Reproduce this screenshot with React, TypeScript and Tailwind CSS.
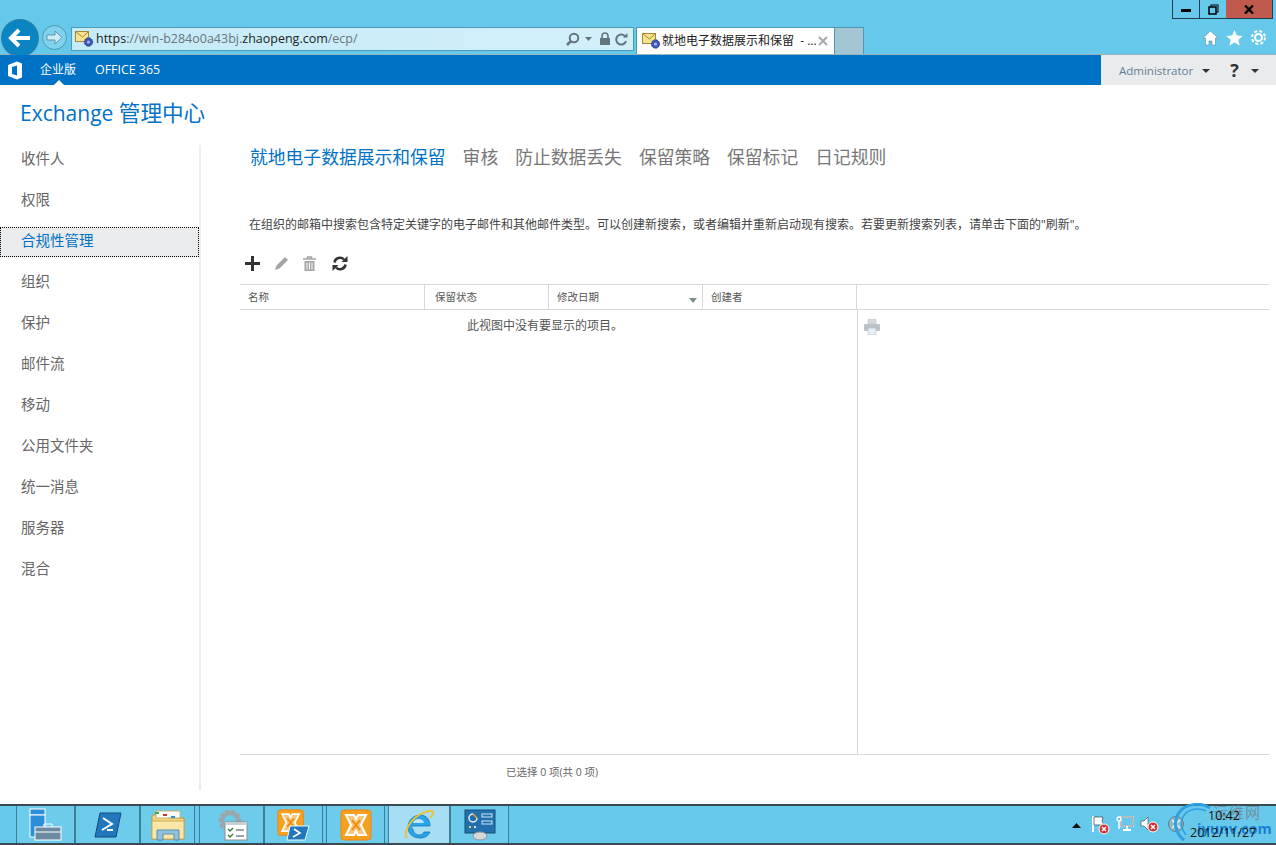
import React from "react";

const MailIcon = () => (
  <svg width="20" height="18" viewBox="0 0 20 18" className="shrink-0">
    <rect x="0.5" y="1.5" width="13" height="10" fill="#f7e28f" stroke="#a58b35" />
    <path d="M1 2l6.500 5L13 2" fill="none" stroke="#a58b35" />
    <circle cx="13.500" cy="12" r="4.200" fill="#3d56b5" stroke="#25357e" strokeDasharray="1.500 1" />
    <circle cx="13.500" cy="12" r="1.600" fill="#a8b7ee" />
  </svg>
);

const ExchangeMark = ({ s }: { s: number }) => (
  <g transform={`scale(${s})`}>
    <rect x="1" y="1" width="30" height="30" rx="3" fill="#f7a01f" stroke="#ec8410" />
    <path d="M6 6h8l2 4 2-4h8l-5 10 5 10h-8l-2-4-2 4H6l5-10z" fill="#f9c777" stroke="#fff" strokeWidth="2" />
    <path d="M12 11l4 5 4-5M12 21l4-5 4 5" fill="none" stroke="#f08a10" strokeWidth="2" />
  </g>
);

const Tray = () => (
  <div className="relative h-full w-[206px]">
    <svg width="9" height="5" viewBox="0 0 9 5" className="absolute left-[2px] top-[17px]"><path d="M4.500 0L9 5H0z" fill="#111" /></svg>
    <svg width="20" height="20" viewBox="0 0 20 20" className="absolute left-[21px] top-[9px]">
      <path d="M2 1v16" stroke="#fff" strokeWidth="2" /><path d="M3 2h9l-1 4 2 4H3z" fill="#fff" stroke="#345" strokeWidth=".7" />
      <circle cx="13" cy="14" r="5" fill="#d32f2f" stroke="#fff" /><path d="M11 12l4 4m0-4l-4 4" stroke="#fff" strokeWidth="1.500" />
    </svg>
    <svg width="18" height="18" viewBox="0 0 18 18" className="absolute left-[46px] top-[9px]">
      <rect x="5" y="2" width="12" height="9" fill="none" stroke="#fff" strokeWidth="1.800" /><rect x="5" y="2" width="12" height="9" fill="none" stroke="#234" strokeWidth=".6" />
      <path d="M11 11v3M7 15h8" stroke="#fff" strokeWidth="1.800" /><circle cx="3" cy="4" r="2" fill="none" stroke="#fff" strokeWidth="1.400" /><path d="M3 6v8" stroke="#fff" strokeWidth="1.400" />
    </svg>
    <svg width="20" height="18" viewBox="0 0 20 18" className="absolute left-[70px] top-[9px]">
      <path d="M1 6h3l4-4v13l-4-4H1z" fill="#fff" stroke="#345" strokeWidth=".6" />
      <circle cx="13" cy="12" r="5" fill="#d32f2f" stroke="#fff" /><path d="M11 10l4 4m0-4l-4 4" stroke="#fff" strokeWidth="1.500" />
    </svg>
    <svg width="18" height="18" viewBox="0 0 18 18" className="absolute left-[97px] top-[9px]">
      <circle cx="9" cy="9" r="7.500" fill="#8fb9c7" stroke="#5f7c88" /><path d="M5 5l8 8M13 5l-8 8" stroke="#e8f4f8" strokeWidth="1.500" />
    </svg>
    <svg width="56" height="40" viewBox="0 0 56 40" className="absolute left-[102px] top-[-3px]">
      <path d="M38 5C29-1 13 0 6 11c-5 9-2 20 6 26" fill="none" stroke="#2f9fe0" strokeWidth="3" />
      <path d="M34 8C26 4 15 6 11 14c-3 6-1 13 3 18" fill="none" stroke="#2f9fe0" strokeWidth="1.500" />
    </svg>
    <div className="absolute left-[143px] top-[-1px] text-[15px] leading-[15px] tracking-[1px] text-[#6f8f9e]">运维网</div>
    <div className="absolute left-[127px] top-[15px] text-[14.500px] font-bold leading-[16px] text-[#1a80d2]">iyunv.com</div>
    <div className="absolute left-[138px] top-[1px] text-[12.500px] leading-[18px] text-[#111]">10:42</div>
    <div className="absolute left-[120px] top-[18px] text-[12.500px] leading-[18px] text-[#111]">2012/11/27</div>
  </div>
);

const tasks: { w: number; ml?: number; active?: boolean; icon: React.ReactNode }[] = [
  { w: 59, icon: (
    <svg width="33" height="33" viewBox="0 0 33 33">
      <rect x="1" y="1" width="15" height="6" fill="#2a8fd8" stroke="#fff" /><rect x="1" y="7" width="15" height="22" fill="#2a8fd8" stroke="#fff" />
      <rect x="6" y="19" width="26" height="13" fill="#6d8ba0" stroke="#fff" /><path d="M15 19v-3h8v3M6 24h26" fill="none" stroke="#fff" />
    </svg>) },
  { w: 65, icon: (
    <svg width="28" height="26" viewBox="0 0 28 26">
      <path d="M6 1h21l-5 24H1z" fill="#2277bd" stroke="#154a7a" /><path d="M9 6l9 6-10 6M13 18h6" fill="none" stroke="#fff" strokeWidth="2" />
    </svg>) },
  { w: 55, icon: (
    <svg width="34" height="32" viewBox="0 0 34 32">
      <path d="M1 6h13l2 3h17v21H1z" fill="#f4d67c" stroke="#b6964a" /><rect x="5" y="2" width="24" height="7" fill="#fff" stroke="#c9b27a" />
      <rect x="4" y="3" width="4" height="2" fill="#3aa845" /><rect x="12" y="5" width="4" height="2" fill="#c9342c" /><rect x="20" y="7" width="4" height="2" fill="#2a8fd8" />
      <path d="M1 12h32v18H1z" fill="#fbe8a8" stroke="#c9a95a" /><path d="M6 31V21h22v10h-5v-6H12v6z" fill="#8fc3dd" stroke="#5a8eab" />
    </svg>) },
  { w: 65, ml: 4, icon: (
    <svg width="32" height="33" viewBox="0 0 32 33">
      <circle cx="14" cy="13" r="10" fill="none" stroke="#9aa7ad" strokeWidth="3" strokeDasharray="4 2" /><circle cx="14" cy="13" r="8" fill="none" stroke="#9aa7ad" strokeWidth="4" />
      <rect x="9" y="14" width="22" height="18" fill="#fff" stroke="#8a8f94" /><rect x="9" y="14" width="22" height="3" fill="#c9ced2" />
      <path d="M12 21l2 2 3-3M12 27l2 2 3-3" fill="none" stroke="#2d7f2e" strokeWidth="1.300" /><path d="M20 22h8M20 28h8" stroke="#3b4a55" />
    </svg>) },
  { w: 59, icon: (
    <svg width="33" height="32" viewBox="0 0 33 32">
      <ExchangeMark s={0.85} />
      <path d="M13 17h19l-4 14H10z" fill="#2277bd" stroke="#dff" /><path d="M17 20l6 4-7 4" fill="none" stroke="#fff" strokeWidth="1.600" />
    </svg>) },
  { w: 59, ml: 3, icon: (
    <svg width="32" height="32" viewBox="0 0 32 32"><ExchangeMark s={1} /></svg>) },
  { w: 62, ml: 3, active: true, icon: (
    <svg width="32" height="32" viewBox="0 0 32 32">
      <path d="M9 17h18c0-7-4-11-10-11S5 11 5 18s5 11 12 11c5 0 8-2 10-6h-6c-1 2-2 3-5 3-3 0-6-3-6-6" fill="#2ba3e8" stroke="#0d6db4" strokeWidth=".7" />
      <path d="M10 14h11c-.5-3-3-4-5.500-4S11 11 10 14z" fill="#bfe6fa" />
      <path d="M4 29C0 25 6 12 16 6c7-4 13-5 14-3 1 1-1 4-3 6" fill="none" stroke="#eec22f" strokeWidth="1.800" />
    </svg>) },
  { w: 59, icon: (
    <svg width="32" height="32" viewBox="0 0 32 32">
      <rect x="1" y="1" width="30" height="23" fill="#2270ad" stroke="#174e79" /><path d="M9 5a4 4 0 1 0 4 4" fill="none" stroke="#f4f4f4" strokeWidth="1.400" /><path d="M9 5l4 4" stroke="#f2a23a" strokeWidth="1.500" />
      <rect x="18" y="5" width="10" height="3" fill="none" stroke="#cfe6f5" /><rect x="18" y="12" width="10" height="3" fill="none" stroke="#cfe6f5" />
      <rect x="5" y="17" width="2" height="2" fill="#e8d04c" /><rect x="10" y="17" width="2" height="2" fill="#cfe6f5" />
      <ellipse cx="16" cy="27" rx="7" ry="4" fill="#d4d8da" stroke="#8d9498" />
    </svg>) },
];

const sidebar = ["收件人", "权限", "合规性管理", "组织", "保护", "邮件流", "移动", "公用文件夹", "统一消息", "服务器", "混合"];
const tabs = ["就地电子数据展示和保留", "审核", "防止数据丢失", "保留策略", "保留标记", "日记规则"];

export default function App() {
  return (
    <div className="flex h-[845px] w-[1276px] flex-col overflow-hidden bg-white text-[#333]" style={{ fontFamily: '"Open Sans","Noto Sans CJK SC",sans-serif' }}>
      {/* browser chrome */}
      <header className="flex h-[55px] shrink-0 flex-col border-b border-[#98b4bf] bg-[#66c9eb]">
        <div className="flex h-[20px] justify-end pr-[3px]">
          <div className="flex h-[19px] border border-t-0 border-[#1c3f50]">
            <div className="flex w-[27px] items-center justify-center border-r border-[#1c3f50]"><div className="mt-[2px] h-[3px] w-[10px] bg-black" /></div>
            <div className="flex w-[26px] items-center justify-center">
              <svg width="11" height="11" viewBox="0 0 11 11"><rect x="3" y="1" width="7" height="7" fill="none" stroke="#000" /><rect x="1" y="3" width="7" height="7" fill="#66c9eb" stroke="#000" strokeWidth="1.500" /></svg>
            </div>
            <div className="flex w-[46px] items-center justify-center bg-[#c0594e]">
              <svg width="10" height="9" viewBox="0 0 10 9"><path d="M1 .5l8 8M9 .5l-8 8" stroke="#000" strokeWidth="2.400" /></svg>
            </div>
          </div>
        </div>
        <div className="flex h-[34px] items-start">
          <div className="ml-[2px] flex h-[36px] w-[36px] shrink-0 items-center justify-center rounded-full bg-[#0b84c2] ring-1 ring-[#2a7fa5]">
            <svg width="24" height="20" viewBox="0 0 24 20"><path d="M11 2L3 10l8 8M3 10h19" fill="none" stroke="#fff" strokeWidth="4" /></svg>
          </div>
          <div className="ml-[4px] mt-[5px] flex h-[25px] w-[25px] shrink-0 items-center justify-center rounded-full border border-[#4a9bb5] bg-[#7fd2ee]">
            <svg width="17" height="15" viewBox="0 0 17 15"><path d="M9 1l7 6.500-7 6.500v-4H1V5h8z" fill="#cdeef8" stroke="#5e96a8" /></svg>
          </div>
          <div className="ml-[4px] mt-[7px] flex h-[24px] w-[563px] shrink-0 items-center border border-[#4a9bb5] bg-gradient-to-r from-[#c4ebf8] to-[#d2f0fa] pl-[3px] pr-[5px]">
            <MailIcon />
            <div className="ml-[1px] flex-1 whitespace-nowrap text-[12.500px] leading-none text-[#6b7378]">
              <span className="text-[#222]">https</span>://win-b284o0a43bj.<span className="text-[#222]">zhaopeng.com</span>/ecp/
            </div>
            <svg width="15" height="15" viewBox="0 0 15 15"><circle cx="9" cy="6" r="4.300" fill="none" stroke="#64757c" strokeWidth="2" /><path d="M6 9l-4 4" stroke="#64757c" strokeWidth="2.500" /></svg>
            <svg width="9" height="5" viewBox="0 0 9 5" className="ml-[4px]"><path d="M1 0h7L4.500 4z" fill="#64757c" /></svg>
            <svg width="12" height="14" viewBox="0 0 12 14" className="ml-[6px]"><rect x="1" y="6" width="10" height="7" fill="#64757c" /><path d="M3 6V4a3 3 0 0 1 6 0v2" fill="none" stroke="#64757c" strokeWidth="1.600" /></svg>
            <svg width="13" height="13" viewBox="0 0 13 13" className="ml-[4px]"><path d="M10.500 4A5 5 0 1 0 11 8" fill="none" stroke="#64757c" strokeWidth="2" /><path d="M8 4.500h4.500V0z" fill="#64757c" /></svg>
          </div>
          <div className="ml-[2px] mt-[7px] flex h-[27px] w-[199px] shrink-0 items-center border-x border-t border-[#4a9bb5] bg-white pl-[5px] pr-[6px]">
            <MailIcon />
            <span className="flex-1 whitespace-nowrap text-[12px] leading-none text-[#222]">就地电子数据展示和保留 &nbsp;- ...</span>
            <svg width="10" height="10" viewBox="0 0 10 10"><path d="M1 1l8 8M9 1l-8 8" stroke="#a3abaf" strokeWidth="2" /></svg>
          </div>
          <div className="mt-[7px] h-[27px] w-[29px] shrink-0 border-r border-t border-[#4a9bb5] bg-[#a3c5d4]" />
          <div className="ml-auto mr-[9px] mt-[9px] flex items-center gap-[7px]">
            <svg width="17" height="16" viewBox="0 0 17 16"><path d="M8.500 1L1 8h2.500v7h3.500v-4h3v4h3.500V8H16z" fill="#fff" stroke="#4a7a90" strokeWidth=".5" /></svg>
            <svg width="17" height="16" viewBox="0 0 17 16"><path d="M8.500 0l2.400 5.400 5.800.6-4.400 3.800 1.300 5.700-5.100-3-5.100 3 1.300-5.700L.3 6l5.800-.6z" fill="#fff" /></svg>
            <svg width="17" height="17" viewBox="0 0 17 17"><circle cx="8.500" cy="8.500" r="3.500" fill="none" stroke="#fff" strokeWidth="2" /><circle cx="8.500" cy="8.500" r="6.500" fill="none" stroke="#fff" strokeWidth="2" strokeDasharray="3 2.100" /></svg>
          </div>
        </div>
      </header>

      {/* suite bar */}
      <nav className="flex h-[30px] shrink-0 items-center bg-[#0072c6] text-white">
        <svg width="16" height="19" viewBox="0 0 16 19" className="ml-[7px]">
          <path d="M1 4L10 .5 15 2.500v14L10 18.500 1 15z" fill="#fff" /><path d="M5 6l5-1.500v10L5 13z" fill="#0072c6" />
        </svg>
        <div className="relative ml-[17px] flex h-full items-center text-[12px]">
          企业版
          <div className="absolute bottom-0 left-[14px] h-0 w-0 border-x-[5px] border-b-[5px] border-x-transparent border-b-white" />
        </div>
        <span className="ml-[19px] text-[12.400px]">OFFICE 365</span>
        <div className="ml-auto flex h-full w-[175px] items-center bg-[#eaebec] text-[#5f7f99]">
          <span className="ml-[18px] mt-[1px] text-[11.500px]">Administrator</span>
          <div className="ml-[9px] mt-[1px] h-0 w-0 border-x-[4px] border-t-[4px] border-x-transparent border-t-[#333]" />
          <span className="ml-[20px] text-[18px] font-bold leading-none text-[#333]">?</span>
          <div className="ml-[12px] mt-[1px] h-0 w-0 border-x-[4px] border-t-[4px] border-x-transparent border-t-[#333]" />
        </div>
      </nav>

      {/* page */}
      <div className="flex min-h-0 flex-1 flex-col">
        <h1 className="ml-[20px] mt-[13px] h-[47px] text-[21px] font-normal leading-[30px] text-[#0072c6]">
          Exchange <span className="text-[21.600px]">管理中心</span>
        </h1>
        <div className="flex min-h-0 flex-1 pb-[14px]">
          <aside className="flex w-[201px] shrink-0 flex-col gap-[11px] border-r-2 border-[#eeeeee]">
            {sidebar.map((s) => (
              <div
                key={s}
                className={
                  "flex h-[30px] items-center pb-[2px] text-[14.500px] " +
                  (s === "合规性管理"
                    ? "border border-dotted border-black bg-[#eaebec] pl-[20px] text-[#0072c6]"
                    : "pl-[21px] text-[#666]")
                }
              >
                {s}
              </div>
            ))}
          </aside>
          <main className="flex min-w-0 flex-1 flex-col pl-[39px] pr-[7px]">
            <div className="flex h-[26px] items-center gap-[17px] pl-[10px] text-[17.800px] leading-none text-[#777]">
              {tabs.map((t, i) => (
                <span key={t} className={i === 0 ? "text-[#0072c6]" : ""}>{t}</span>
              ))}
            </div>
            <p className="mt-[42px] h-[24px] whitespace-nowrap pl-[9px] text-[12px] leading-[24px] text-[#444]">
              在组织的邮箱中搜索包含特定关键字的电子邮件和其他邮件类型。可以创建新搜索，或者编辑并重新启动现有搜索。若要更新搜索列表，请单击下面的"刷新"。
            </p>
            <div className="mt-[14px] flex h-[24px] items-center gap-[14px] pl-[5px]">
              <svg width="15" height="15" viewBox="0 0 15 15"><path d="M7.500 0v15M0 7.500h15" stroke="#333" strokeWidth="3" /></svg>
              <svg width="15" height="15" viewBox="0 0 15 15"><path d="M11 1l3 3-8.500 8.500-4.500 1.500 1.500-4.500z" fill="#a5a5a5" /></svg>
              <svg width="13" height="15" viewBox="0 0 13 15"><path d="M0 3h13M4.500 2.500V1h4v1.500" fill="none" stroke="#a5a5a5" strokeWidth="1.500" /><path d="M1.500 5h10v10h-10z" fill="#a5a5a5" /><path d="M4 6.500v7M6.500 6.500v7M9 6.500v7" stroke="#fff" /></svg>
              <svg width="16" height="15" viewBox="0 0 16 15" className="ml-[2px]"><path d="M2.500 6.500A5.500 5.500 0 0 1 12 3.500" fill="none" stroke="#333" strokeWidth="2.500" /><path d="M9.500 6h6V0z" fill="#333" /><path d="M13.500 8.500A5.500 5.500 0 0 1 4 11.500" fill="none" stroke="#333" strokeWidth="2.500" /><path d="M6.500 9H.5v6z" fill="#333" /></svg>
            </div>
            <section className="mt-[9px] flex min-h-0 flex-1 flex-col">
              <div className="flex h-[26px] shrink-0 border-y border-[#d5dbdd] text-[10.500px] leading-none text-[#555]">
                <div className="flex w-[185px] items-center border-r border-[#d5dbdd] pl-[8px]">名称</div>
                <div className="flex w-[124px] items-center border-r border-[#d5dbdd] pl-[10px]">保留状态</div>
                <div className="flex w-[154px] items-center justify-between border-r border-[#d5dbdd] pl-[8px] pr-[5px]">
                  修改日期
                  <div className="mt-[6px] h-0 w-0 border-x-[4px] border-t-[5px] border-x-transparent border-t-[#7d8c8c]" />
                </div>
                <div className="flex w-[154px] items-center border-r border-[#d5dbdd] pl-[8px]">创建者</div>
              </div>
              <div className="flex min-h-0 flex-1 border-b border-[#d5dbdd]">
                <div className="w-[618px] shrink-0 border-r border-[#d5dbdd] pl-[227px] pt-[8px] text-[12px] leading-[16px] text-[#555]">
                  此视图中没有要显示的项目。
                </div>
                <div className="pl-[6px] pt-[9px]">
                  <svg width="16" height="16" viewBox="0 0 16 16"><rect x="4" y="0" width="8" height="5" fill="#d6dadd" stroke="#b9bfc3" strokeWidth=".5" /><rect x="0" y="5" width="16" height="7" rx="1" fill="#bcc3c6" /><rect x="4" y="9" width="8" height="7" fill="#e4edf3" stroke="#b2babe" strokeWidth=".5" /></svg>
                </div>
              </div>
              <div className="flex h-[35px] w-[618px] shrink-0 items-center justify-center pl-[6px] pt-[1px] text-[10.500px] text-[#666]">
                已选择 0 项(共 0 项)
              </div>
            </section>
          </main>
        </div>
      </div>

      {/* taskbar */}
      <footer className="flex h-[41px] shrink-0 items-stretch border-y-2 border-[#3a4a52] bg-[#66c9eb] pl-[16px]">
        {tasks.map((t, i) => (
          <div
            key={i}
            style={{ width: t.w, marginLeft: t.ml ?? 0 }}
            className={"flex shrink-0 items-center justify-center border-x border-[#3d7f96] " + (t.active ? "bg-[#a8def3]" : "bg-[#6dcbec]")}
          >
            {t.icon}
          </div>
        ))}
        <div className="ml-auto"><Tray /></div>
      </footer>
    </div>
  );
}
